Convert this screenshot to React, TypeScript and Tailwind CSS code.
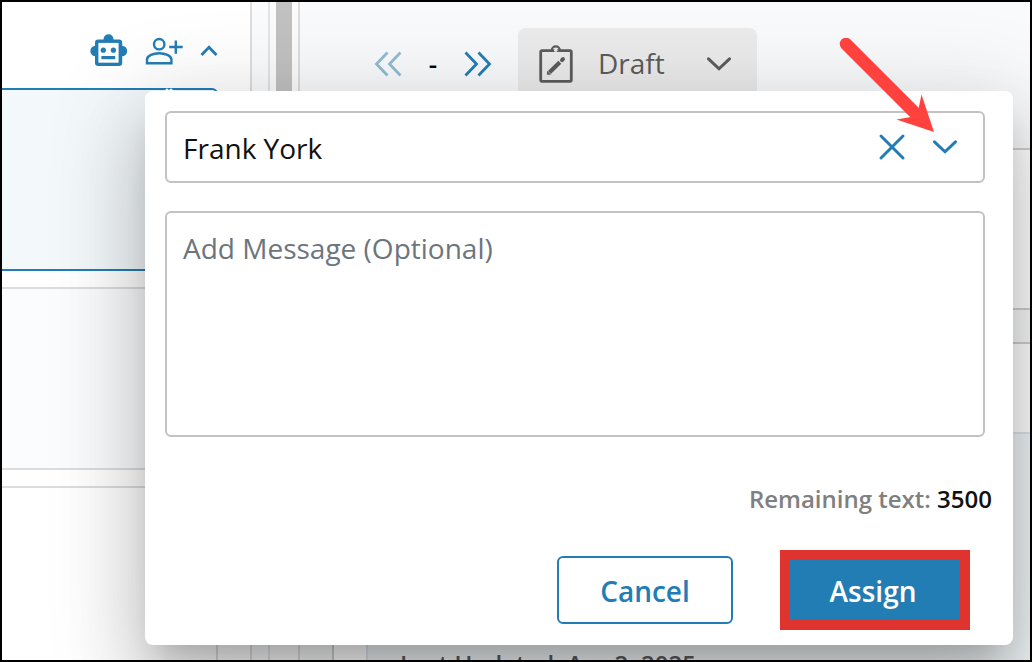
import { useState } from "react";

function RobotIcon() {
  return (
    <svg viewBox="0 0 38 34" className="h-[34px] w-[38px]" aria-hidden="true">
      <g fill="#237db5">
        <circle cx="18.5" cy="5.2" r="5" />
        <circle cx="5.5" cy="17" r="5.2" />
        <circle cx="32" cy="17" r="5.2" />
        <rect x="5" y="5.5" width="27.2" height="26.5" rx="3.2" />
      </g>
      <rect x="8.4" y="8.9" width="20.2" height="19.8" fill="#fff" />
      <g fill="#237db5">
        <circle cx="13.3" cy="16.2" r="2.6" />
        <circle cx="23.4" cy="16.2" r="2.6" />
        <rect x="11.4" y="22" width="13.8" height="3.2" />
      </g>
    </svg>
  );
}

function PersonAddIcon() {
  return (
    <svg viewBox="0 0 38 28" className="h-7 w-[38px]" fill="none" stroke="#237db5" strokeWidth="2.4" aria-hidden="true">
      <circle cx="14.2" cy="7.2" r="5.2" />
      <path d="M2 26.200v-3.600c0-4 6.400-6.400 12.200-6.400s12.200 2.400 12.200 6.400v3.600z" />
      <path d="M24.2 10h13.5M30.800 3.400v13.300" />
    </svg>
  );
}

function ClipboardIcon() {
  return (
    <svg viewBox="0 0 34 38" className="h-[38px] w-[34px]" fill="none" stroke="#5c5c5c" aria-hidden="true">
      <rect x="1.7" y="5.7" width="30.6" height="30.6" rx="1.2" strokeWidth="2.8" />
      <path d="M12.8 5a4 3.6 0 0 1 8 0" strokeWidth="2.2" />
      <circle cx="16.8" cy="5.2" r="1.8" fill="#e7e7e7" stroke="none" />
      <path d="M10.4 27.4 20.8 17.2" strokeWidth="4.2" />
      <path d="M8 29.8v-4l4 4z" fill="#5c5c5c" stroke="none" />
      <path d="m23 15.1 1-1" strokeWidth="4" strokeLinecap="round" />
    </svg>
  );
}

function Chevron({ up = false, className }: { up?: boolean; className: string }) {
  return up ? (
    <svg viewBox="0 0 18 12" className={className} fill="none" stroke="currentColor" strokeWidth="2.8" aria-hidden="true">
      <path d="M1.5 10 9 2.3l7.500 7.700" />
    </svg>
  ) : (
    <svg viewBox="0 0 26 14" className={className} fill="none" stroke="currentColor" strokeWidth="3" strokeLinecap="round" aria-hidden="true">
      <path d="M2.500 1.800 13 11.800 23.500 1.800" />
    </svg>
  );
}

function DoubleChevron({ left = false }: { left?: boolean }) {
  return (
    <svg viewBox="0 0 28 26" className="h-[26px] w-7" fill="none" stroke="currentColor" strokeWidth="2.8" aria-hidden="true">
      <path d={left ? "M13.5 1.5 2.5 13l11 11.5M26.5 1.5 15.5 13l11 11.5" : "M1.5 1.5 12.5 13l-11 11.5M14.5 1.5 25.5 13l-11 11.5"} />
    </svg>
  );
}

function ItemList() {
  return (
    <aside className="flex w-[250px] shrink-0 flex-col border-r-2 border-[#dddddd] bg-white">
      <div className="flex h-[86px] shrink-0 items-center justify-end gap-[17px] pt-3 pr-8">
        <button aria-label="Assistant"><RobotIcon /></button>
        <button aria-label="Assign to person"><PersonAddIcon /></button>
        <button aria-label="Collapse" className="text-[#237db5]"><Chevron up className="h-3 w-[18px]" /></button>
      </div>
      <div className="mr-8 h-[183px] shrink-0 rounded-r-md border-y-2 border-r-2 border-[#237db5] bg-[#f3f8fb]" />
      <div className="mt-4 mr-8 h-[183px] shrink-0 border-y-2 border-r-2 border-[#dddddd] bg-[#fbfcfe]" />
      <div className="mt-4 mr-8 grow border-t-2 border-r-2 border-[#dddddd] bg-white" />
    </aside>
  );
}

function DocumentPane() {
  return (
    <main className="flex min-w-0 grow flex-col bg-[#f9fafc]">
      <div className="flex h-[148px] shrink-0 items-start border-b-2 border-[#cfcfcf] pt-[26px] pl-[74px]">
        <div className="flex h-[72px] items-center">
          <button aria-label="Previous" className="text-[#92bbd6]"><DoubleChevron left /></button>
          <span className="w-[62px] text-center text-[26px] font-semibold text-black">-</span>
          <button aria-label="Next" className="text-[#237db5]"><DoubleChevron /></button>
        </div>
        <button className="ml-[26px] flex h-[72px] w-[239px] items-center rounded-lg bg-[#ebebeb] pl-[21px] text-[28px] text-[#5c5c5c]">
          <ClipboardIcon />
          <span className="ml-[25px] pb-0.5">Draft</span>
          <Chevron className="ml-[41px] h-[14px] w-[26px]" />
        </button>
      </div>
      <div className="h-40 shrink-0 border-b-2 border-[#cfcfcf] bg-white" />
      <div className="flex grow flex-col bg-[#f8faf9] pt-8 pl-8">
        <div className="flex grow flex-col border-t-2 border-l-2 border-[#cfcfcf] bg-white pt-[88px] pl-8">
          <div className="grow border-t-2 border-l-2 border-[#dce4ee] bg-[#f0f5f7] pt-[213px] pl-8">
            <p className="text-[24px] leading-[34px] font-semibold whitespace-nowrap text-[#5c5c5c]">Last Updated: Apr 2, 2025</p>
          </div>
        </div>
      </div>
    </main>
  );
}

function AssignDialog() {
  const limit = 3500;
  const [assignee, setAssignee] = useState("Frank York");
  const [message, setMessage] = useState("");

  return (
    <section
      role="dialog"
      aria-label="Assign"
      className="absolute top-[89px] right-[17px] left-[143px] rounded-lg bg-white pt-5 pr-7 pb-[15px] pl-5 shadow-[0_22px_30px_-14px_rgba(0,0,0,0.2),0_48px_76px_6px_rgba(0,0,0,0.14),0_18px_92px_16px_rgba(0,0,0,0.12)]"
    >
      <svg viewBox="0 0 8 3" className="absolute -top-[3px] left-5 h-[3px] w-2" fill="#fff" aria-hidden="true">
        <circle cx="2" cy="2" r="1.6" />
        <circle cx="6" cy="2" r="1.6" />
      </svg>
      <div className="flex h-[72px] items-center rounded-md border-2 border-[#c2c2c2] pr-[25px] pl-4">
        <input
          aria-label="Assignee"
          value={assignee}
          onChange={(e) => setAssignee(e.target.value)}
          className="h-full min-w-0 grow pt-0.5 text-[28px] text-[#111111] outline-none"
        />
        <button aria-label="Clear" onClick={() => setAssignee("")} className="text-[#237db5]">
          <svg viewBox="0 0 28 28" className="size-7" fill="none" stroke="currentColor" strokeWidth="3" strokeLinecap="round" aria-hidden="true">
            <path d="m3 3 22 22M25 3 3 25" />
          </svg>
        </button>
        <button aria-label="Show people" className="ml-[26px] text-[#237db5]"><Chevron className="h-[14px] w-[26px]" /></button>
      </div>
      <textarea
        aria-label="Message"
        placeholder="Add Message (Optional)"
        maxLength={limit}
        value={message}
        onChange={(e) => setMessage(e.target.value)}
        className="mt-7 block h-[226px] w-full resize-none rounded-md border-2 border-[#c2c2c2] px-4 py-4 text-[28px] leading-[38px] text-[#111111] outline-none placeholder:text-[#6c757d]"
      />
      <p className="-mr-[7px] mt-[46px] text-right text-[24px] leading-8 font-semibold text-[#808080]">
        Remaining text: <span className="text-[#111111]">{limit - message.length}</span>
      </p>
      <div className="mt-[35px] flex items-center justify-end gap-[47px] pr-[15px]">
        <button className="h-[68px] w-[176px] rounded-md border-2 border-[#237db5] pt-0.5 text-[28px] font-semibold text-[#237db5]">Cancel</button>
        <button className="h-20 w-[190px] border-10 border-[#df332e] bg-[#237db5] pt-0.5 pr-1 text-[28px] leading-10 font-semibold text-white">Assign</button>
      </div>
    </section>
  );
}

export default function App() {
  return (
    <div className="relative flex h-screen overflow-hidden border-2 border-black bg-white font-['Open_Sans','Noto_Sans',sans-serif]">
      <ItemList />
      <div className="flex w-12 shrink-0 border-r-2 border-[#dcdcdc] bg-[#fafbfd] pl-4">
        <div className="grow border-l-2 border-[#e4e4e4] bg-[#fbfbfb] pl-1.5">
          <div className="h-1/2 w-4 bg-[#c1c1c1]" />
        </div>
      </div>
      <DocumentPane />
      <AssignDialog />
      <svg viewBox="0 0 98 98" className="pointer-events-none absolute top-9 right-24 size-[98px]" aria-hidden="true">
        <path d="M10 6 80 76" stroke="#ff423d" strokeWidth="12.5" strokeLinecap="round" />
        <path d="M98 94 85.500 56.500 82.500 71 75 79 60.500 81.500z" fill="#ff423d" />
      </svg>
    </div>
  );
}
